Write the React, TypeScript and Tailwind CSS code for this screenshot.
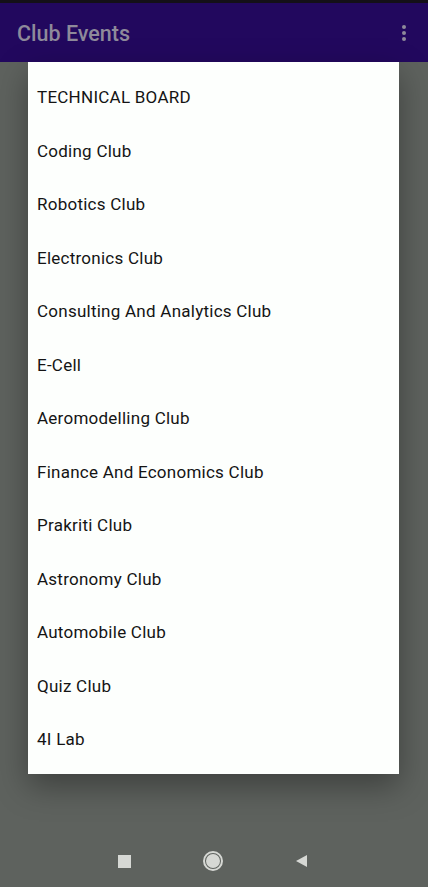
import { FC } from "react"

const clubs = [
    "TECHNICAL BOARD",
    "Coding Club",
    "Robotics Club",
    "Electronics Club",
    "Consulting And Analytics Club",
    "E-Cell",
    "Aeromodelling Club",
    "Finance And Economics Club",
    "Prakriti Club",
    "Astronomy Club",
    "Automobile Club",
    "Quiz Club",
    "4I Lab",
]

const NavBar: FC = () => {
    return (
        <div className="flex items-center justify-center gap-[72px] h-[50px] pr-[1px]">
            <div className="w-[13px] h-[13px] bg-[#d6d8d4]" />
            <div className="w-[20px] h-[20px] rounded-full border-[2px] border-[#d6d8d4] flex items-center justify-center">
                <div className="w-[14px] h-[14px] rounded-full bg-[#d6d8d4]" />
            </div>
            <svg width="14" height="14" viewBox="0 0 14 14">
                <polygon points="12,1 12,13 1,7" fill="#d6d8d4" />
            </svg>
        </div>
    )
}

export default function App() {
    return (
        <div className="w-[428px] h-[887px] bg-[#5e625e] flex flex-col overflow-hidden" style={{ fontFamily: "Roboto, 'Noto Sans', sans-serif" }}>
            <div className="h-[3px] bg-[#141018]" />
            <div className="h-[59px] bg-[#22085e] flex items-center justify-between pl-[17px] pr-[22px]">
                <h1 className="text-[21.5px] font-medium text-[#8e8a9a] pt-[3px]">Club Events</h1>
                <div className="flex flex-col gap-[2px]">
                    <span className="w-[4px] h-[4px] rounded-full bg-[#8e8a9a]" />
                    <span className="w-[4px] h-[4px] rounded-full bg-[#8e8a9a]" />
                    <span className="w-[4px] h-[4px] rounded-full bg-[#8e8a9a]" />
                </div>
            </div>

            <div className="flex-1 flex flex-col">
                <div className="mx-[28px] w-[371px] bg-[#fdfffd] shadow-[0_12px_30px_rgba(0,0,0,0.35)] pt-[9px] pb-[7px]">
                    {clubs.map((club, i) => (
                        <div key={i} className="h-[53.5px] flex items-center pl-[9px] text-[17px] tracking-[0.25px] text-[#141414]">
                            {club}
                        </div>
                    ))}
                </div>
            </div>

            <div className="pb-[1px]">
                <NavBar />
            </div>
        </div>
    )
}
